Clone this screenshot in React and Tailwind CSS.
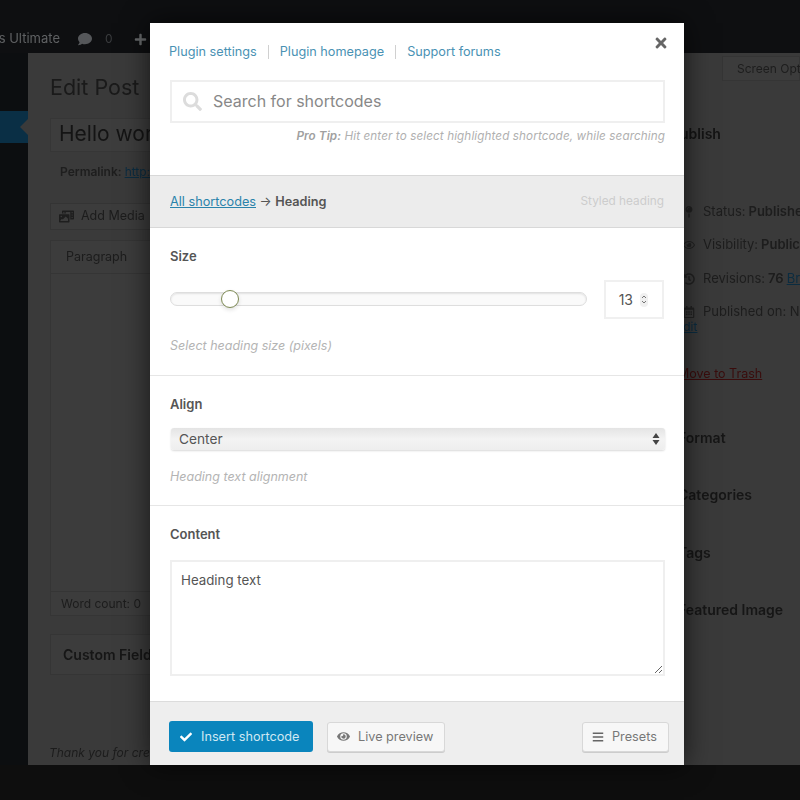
import { FaCheck, FaEye, FaBars, FaSearch, FaTimes, FaComment, FaPlus, FaRegCalendarAlt, FaRegEye, FaHistory, FaMapPin, FaPhotoVideo } from 'react-icons/fa'

const sideBoxes = [
  { title: 'Format', cls: 'h-[57px]' },
  { title: 'Categories', cls: 'h-[58px]' },
  { title: 'Tags', cls: 'h-[57px]' },
  { title: 'Featured Image', cls: 'h-[58px]' },
]

function BehindPage() {
  return (
    <div className="flex flex-col h-full blur-[0.5px]">
      <div className="h-[53px] flex items-center bg-[#0e0f11] text-[#5f6163] text-[13px] pt-[25px] shrink-0">
        <span className="w-[60px] whitespace-nowrap overflow-hidden flex justify-end">Shortcodes Ultimate</span>
        <FaComment className="ml-[18px] text-[#55575a]" size={14} />
        <span className="ml-[13px] text-[#3a3c3e] text-[12px]">0</span>
        <FaPlus className="ml-[21px] text-[#66686a]" size={13} />
      </div>
      <div className="flex flex-1 min-h-0">
        <div className="w-[28px] bg-[#0c0e10] shrink-0 pt-[58px]">
          <div className="relative h-[32px] bg-[#0a2f45]">
            <div className="absolute right-0 top-[8px] border-y-[8px] border-y-transparent border-r-[8px] border-r-[#3a3a3a]" />
          </div>
        </div>
        <div className="flex-1 bg-[#3a3a3a] flex relative overflow-hidden">
          <div className="w-[600px] pl-[22px] shrink-0 flex flex-col">
            <h1 className="text-[21.500px] text-[#1a1a1a] mt-[19px] leading-[30px]">Edit Post</h1>
            <div className="mt-[16px] h-[34px] bg-[#3d3d3d] border border-[#363636] pl-[8px] text-[21px] leading-[30px] text-[#141414]">Hello world!</div>
            <p className="mt-[12px] pl-[10px] text-[12px] font-semibold text-[#1e1e1e] leading-[16px]">Permalink: <span className="text-[#0b2c40] underline font-normal">http://localhost</span></p>
            <div className="mt-[23px] h-[27px] w-[110px] border border-[#343434] bg-[#3c3c3c] flex items-center gap-[7px] pl-[8px] text-[12.500px] text-[#1c1c1c]">
              <FaPhotoVideo className="text-[#1e1e1e]" size={15} />
              Add Media
            </div>
            <div className="mt-[10px] h-[376px] flex flex-col border border-[#353535] bg-[#3c3c3c]">
              <div className="h-[33px] flex items-center pl-[15px] text-[12.500px] text-[#1c1c1c] border-b border-[#353535]">Paragraph</div>
              <div className="flex-1" />
              <div className="h-[24px] flex items-center pl-[10px] text-[12px] text-[#1c1c1c] border-t border-[#353535]">Word count: 0</div>
            </div>
            <div className="mt-[18px] h-[41px] border border-[#353535] bg-[#3c3c3c] flex items-center pl-[12px] text-[14px] font-semibold text-[#161616]">Custom Fields</div>
            <p className="mt-[69px] -ml-px text-[12px] italic text-[#1c1c1c]">Thank you for creating with WordPress.</p>
          </div>
          <div className="flex-1 min-w-0 flex flex-col pl-[54px] whitespace-nowrap">
            <div className="self-end mt-[3px] h-[25px] w-[78px] bg-[#3c3c3c] border border-[#353535] pl-[14px] text-[12px] leading-[24px] text-[#1d1d1d]">Screen Options</div>
            <div className="mt-[38px] ml-[-12px] h-[28px] pl-[11px] flex items-center text-[14px] font-semibold text-[#141414] overflow-hidden"><span className="-ml-[10px]">Publish</span></div>
            <div className="mt-[48px] flex flex-col text-[13px] text-[#1d1d1d] ml-[1px]">
              <div className="h-[33px] flex items-center gap-[8px]"><FaMapPin className="text-[#222] w-[12px] shrink-0" size={12} />Status: <b className="font-semibold -ml-[5px]">Published</b></div>
              <div className="h-[34px] flex items-center gap-[8px]"><FaRegEye className="text-[#222] w-[12px] shrink-0" size={12} />Visibility: <b className="font-semibold -ml-[5px]">Public</b></div>
              <div className="h-[33px] flex items-center gap-[8px]"><FaHistory className="text-[#222] w-[12px] shrink-0" size={12} />Revisions: <b className="font-semibold -ml-[5px]">76</b> <span className="text-[#0b2c40] underline -ml-[5px]">Browse</span></div>
              <div className="h-[33px] flex items-center gap-[8px]"><FaRegCalendarAlt className="text-[#222] w-[12px] shrink-0" size={12} />Published on: Nov</div>
              <span className="text-[#0b2c40] underline -mt-[8px] leading-[14px] text-[12px] -ml-[7px]">Edit</span>
            </div>
            <span className="mt-[31px] text-[12.5px] text-[#3a0c0c] underline -ml-[4px]">Move to Trash</span>
            <div className="mt-[25px] flex flex-col -ml-[4px] text-[14px] font-semibold text-[#161616]">
              {sideBoxes.map(b => (
                <div key={b.title} className={`${b.cls} flex items-center`}>{b.title}</div>
              ))}
            </div>
          </div>
        </div>
      </div>
      <div className="h-[35px] bg-[#0e0e0e] shrink-0" />
    </div>
  )
}

function Help({ children, className = '' }) {
  return <p className={`text-[12.5px] italic text-[#b4b4b4] leading-[16px] ${className}`}>{children}</p>
}

function Label({ children }) {
  return <div className="text-[13px] font-semibold text-[#555] leading-[16px]">{children}</div>
}

function Modal() {
  return (
    <div className="absolute left-[150px] top-[23px] w-[534px] h-[742px] bg-white flex flex-col shadow-[0_0_26px_rgba(0,0,0,0.65)]">
      <div className="relative h-[152px] shrink-0 pl-[19px] pr-[19px] pt-[21px]">
        <div className="flex items-center text-[12.7px] text-[#4a92b4] leading-[16px]">
          <span>Plugin settings</span>
          <span className="mx-[11px] h-[14px] w-px bg-[#d0d0d0]" />
          <span>Plugin homepage</span>
          <span className="mx-[11px] h-[14px] w-px bg-[#d0d0d0]" />
          <span>Support forums</span>
        </div>
        <FaTimes className="absolute right-[15px] top-[12px] text-[#666]" size={16} />
        <div className="mt-[20px] ml-[1px] h-[43px] border-2 border-[#efefef] flex items-center pl-[11px] gap-[11px]">
          <FaSearch className="text-[#dcdcdc]" size={19} />
          <input className="flex-1 min-w-0 pb-[2px] text-[16px] text-[#888] placeholder:text-[#888] outline-none" placeholder="Search for shortcodes" />
        </div>
        <p className="mt-[5px] text-right text-[11.7px] italic text-[#b0b0b0] leading-[16px] tracking-[0.1px]"><b className="font-semibold text-[#a0a0a0]">Pro Tip:</b> Hit enter to select highlighted shortcode, while searching</p>
      </div>
      <div className="h-[53px] shrink-0 bg-[#ececec] border-y border-[#d8d8d8] flex items-center justify-between px-[20px] text-[12.7px]">
        <div className="text-[#555]">
          <span className="text-[#2a83ab] underline">All shortcodes</span>
          {' → '}
          <b className="font-semibold">Heading</b>
        </div>
        <span className="text-[11.800px] text-[#cdcdcd]">Styled heading</span>
      </div>
      <div className="h-[148px] shrink-0 border-b border-[#e6e6e6] px-[20px] pt-[20px]">
        <Label>Size</Label>
        <div className="mt-[16px] flex items-center gap-[17px]">
          <div className="relative flex-1 mb-[2px] h-[14px] rounded-full border border-[#dedede] bg-[#fafafa] shadow-[inset_0_1px_2px_rgba(0,0,0,0.1)]">
            <div className="absolute left-[50px] top-[-3px] w-[18px] h-[18px] rounded-full bg-white border border-[#7e8a55] shadow-[0_2px_4px_rgba(0,0,0,0.12)]" />
          </div>
          <div className="w-[60px] h-[39px] border-2 border-[#f0f0f0] flex items-center justify-end pr-[14px] gap-[7px] text-[14px] text-[#555]">
            13
            <span className="w-[8px] h-[14px] rounded-full bg-[#f0f0f0] flex flex-col items-center justify-center text-[#777]">
              <svg width="6" height="11" viewBox="0 0 6 11" fill="none" stroke="currentColor" strokeWidth="1"><path d="M1 4 3 2l2 2" /><path d="M1 7l2 2 2-2" /></svg>
            </span>
          </div>
        </div>
        <Help className="mt-[19px]">Select heading size (pixels)</Help>
      </div>
      <div className="h-[130px] shrink-0 border-b border-[#e6e6e6] px-[20px] pt-[20px]">
        <Label>Align</Label>
        <div className="mt-[16px] h-[22px] ml-px mr-[-1px] rounded-[3px] bg-gradient-to-b from-[#e4e4e4] via-[#f3f3f3] to-[#eeeeee] shadow-[0_1px_2px_rgba(0,0,0,0.15)] flex items-center justify-between pl-[8px] pr-[5px] text-[13.700px] text-[#555]">
          Center
          <svg width="8" height="14" viewBox="0 0 8 14" fill="#444"><path d="M4 1 7.500 6H.5zM4 13 .5 8h7z" /></svg>
        </div>
        <Help className="mt-[19px]">Heading text alignment</Help>
      </div>
      <div className="h-[195px] shrink-0 px-[20px] pt-[20px] flex flex-col">
        <Label>Content</Label>
        <textarea className="mt-[18px] h-[116px] w-[495px] border-2 border-[#efefef] px-[9px] py-[8px] text-[13.300px] leading-[20px] text-[#555] outline-none" defaultValue="Heading text" />
      </div>
      <div className="flex-1 bg-[#eeeeee] border-t border-[#dcdcdc] flex items-center pl-[19px] pr-[15px] text-[12.7px] pt-[6px]">
        <button className="h-[31px] w-[144px] rounded-[3px] bg-[#0a85bd] text-[#cfe8f3] flex items-center pl-[11px] gap-[9px]">
          <FaCheck className="text-white" size={12} />
          Insert shortcode
        </button>
        <button className="ml-[14px] h-[30px] w-[118px] rounded-[3px] bg-[#f7f7f7] border border-[#d8d8d8] shadow-[0_1px_0_#ccc] text-[#777] flex items-center pl-[9px] gap-[8px]">
          <FaEye className="text-[#777]" size={13} />
          Live preview
        </button>
        <button className="ml-auto h-[30px] w-[87px] rounded-[3px] bg-[#f7f7f7] border border-[#d8d8d8] shadow-[0_1px_0_#ccc] text-[#777] flex items-center pl-[9px] gap-[8px]">
          <FaBars className="text-[#666]" size={12} />
          Presets
        </button>
      </div>
    </div>
  )
}

export default function App() {
  return (
    <div className="relative w-[800px] h-[800px] overflow-hidden bg-[#0e0e0e] font-['Inter','Liberation_Sans',sans-serif]">
      <BehindPage />
      <Modal />
    </div>
  )
}
